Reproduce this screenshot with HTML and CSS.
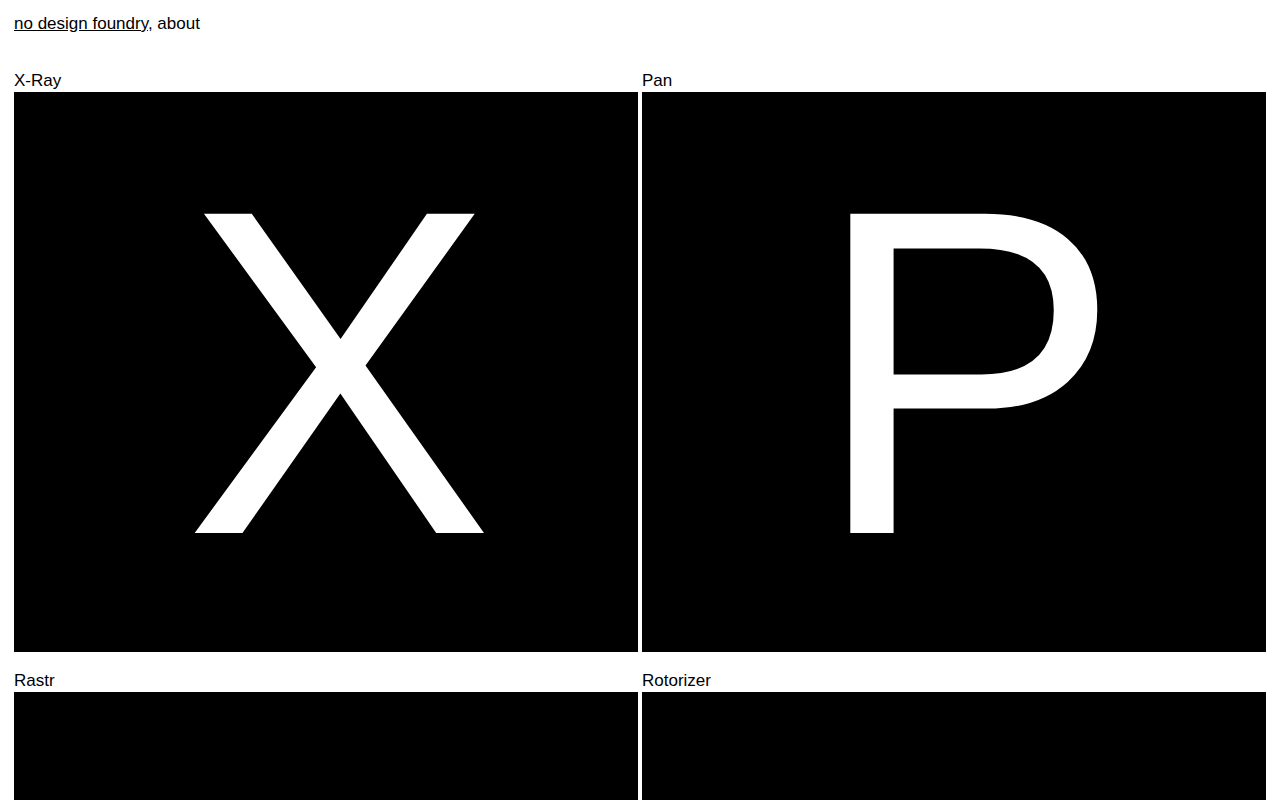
FILE: index.html
```html
<!DOCTYPE html>
<html lang="en">
<head>
<meta charset="utf-8">
<title>no design foundry</title>
<link rel="stylesheet" href="styles.css">
</head>
<body>
<header class="site-header">
  <a class="home-link" href="#">no design foundry</a>, <span class="about">about</span>
</header>
<main class="fonts">
  <section class="font-card">
    <div class="font-name">X-Ray</div>
    <div class="specimen"><span class="glyph">X</span></div>
  </section>
  <section class="font-card">
    <div class="font-name">Pan</div>
    <div class="specimen"><span class="glyph">P</span></div>
  </section>
  <section class="font-card">
    <div class="font-name">Rastr</div>
    <div class="specimen"><span class="glyph">R</span></div>
  </section>
  <section class="font-card">
    <div class="font-name">Rotorizer</div>
    <div class="specimen"><span class="glyph">R</span></div>
  </section>
</main>
</body>
</html>
```
FILE: styles.css
```css
html, body {
  margin: 0;
  padding: 0;
  background: #fff;
}
body {
  font-family: "Liberation Sans", Arial, sans-serif;
  font-size: 17px;
  line-height: 20px;
  color: #000;
  padding: 14px 14px 14px 14px;
}
.site-header {
  height: 20px;
}
.home-link {
  color: #000;
  text-decoration: underline;
}
.fonts {
  margin-top: 38px;
  display: grid;
  grid-template-columns: 1fr 1fr;
  column-gap: 4px;
  row-gap: 20px;
}
.font-name {
  line-height: 18px;
  padding-bottom: 2px;
}
.specimen {
  background: #000;
  height: 560px;
  display: flex;
  align-items: center;
  justify-content: center;
  overflow: hidden;
}
.glyph {
  color: #fff;
  font-size: 464px;
  line-height: 1;
  padding-left: 26px;
}
```
